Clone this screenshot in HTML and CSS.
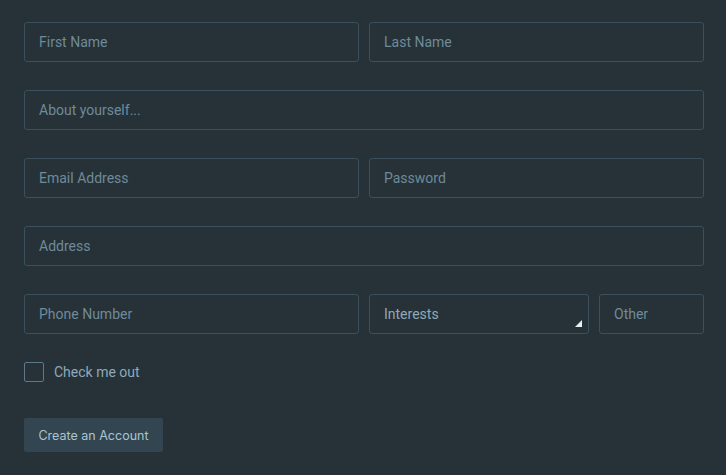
FILE: index.html
```html
<!DOCTYPE html>
<html>
<head>
<meta charset="utf-8">
<link rel="stylesheet" href="styles.css">
</head>
<body>
<form class="form">
  <div class="row">
    <input class="field" placeholder="First Name">
    <input class="field" placeholder="Last Name">
  </div>
  <div class="row">
    <input class="field" placeholder="About yourself...">
  </div>
  <div class="row">
    <input class="field" placeholder="Email Address">
    <input class="field" placeholder="Password">
  </div>
  <div class="row">
    <input class="field" placeholder="Address">
  </div>
  <div class="row">
    <input class="field" placeholder="Phone Number">
    <div class="select">
      <span>Interests</span>
      <svg class="grip" width="7" height="7" viewBox="0 0 7 7"><path d="M7 0V7H0Z" fill="#e8f0f4"/></svg>
    </div>
    <input class="field other" placeholder="Other">
  </div>
  <label class="check">
    <span class="box"></span>
    <span>Check me out</span>
  </label>
  <button type="button" class="btn">Create an Account</button>
</form>
</body>
</html>
```
FILE: styles.css
```css
html, body {
  margin: 0;
  background: #263238;
}
body {
  padding: 22px 22px 0 24px;
  font-family: Roboto, "Liberation Sans", sans-serif;
  font-size: 14px;
}
.form {
  display: flex;
  flex-direction: column;
  align-items: flex-start;
}
.row {
  display: flex;
  gap: 10px;
  width: 680px;
  margin-bottom: 28px;
}
.field {
  flex: 1 1 0;
  min-width: 0;
  height: 40px;
  box-sizing: border-box;
  border: 1px solid #3b505d;
  border-radius: 3px;
  background: transparent;
  padding: 0 14px;
  font-family: inherit;
  font-size: 14px;
  color: #8aa4b3;
  outline: none;
}
.field::placeholder {
  color: #6f8a9a;
}
.select {
  position: relative;
  flex: 0 0 220px;
  height: 40px;
  box-sizing: border-box;
  border: 1px solid #3b505d;
  border-radius: 3px;
  padding: 0 14px;
  display: flex;
  align-items: center;
  color: #8fa9b9;
}
.grip {
  position: absolute;
  right: 6px;
  bottom: 6px;
}
.field.other {
  flex: 0 0 105px;
}
.check {
  display: flex;
  align-items: center;
  gap: 10px;
  color: #8fa9b9;
  height: 20px;
}
.box {
  width: 20px;
  height: 20px;
  box-sizing: border-box;
  border: 1px solid #5d7888;
  border-radius: 2px;
}
.btn {
  margin-top: 36px;
  width: 139px;
  height: 34px;
  border: 0;
  border-radius: 2px;
  background: #334550;
  color: #acc4d2;
  font-family: Inter, Roboto, sans-serif;
  font-size: 12.5px;
  padding: 0;
}
```
